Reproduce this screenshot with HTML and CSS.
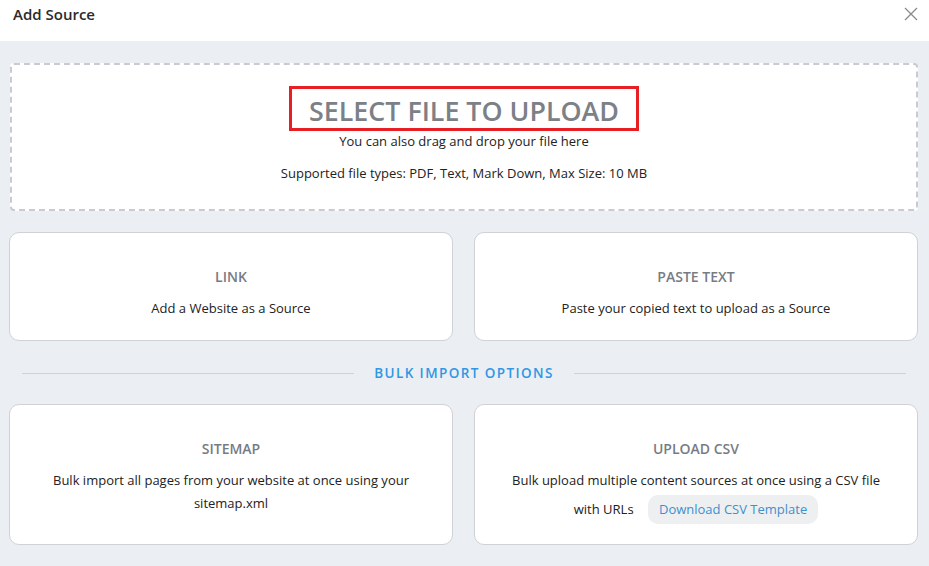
FILE: index.html
```html
<!DOCTYPE html>
<html>
<head>
<meta charset="utf-8">
<link rel="stylesheet" href="styles.css">
</head>
<body>
<div class="modal">
  <header class="modal-header">
    <h1 class="modal-title">Add Source</h1>
    <button class="close-btn" aria-label="Close">
      <svg width="14" height="14" viewBox="0 0 14 14"><path d="M1 1L13 13M13 1L1 13" stroke="#8a8a8a" stroke-width="1.3" fill="none"/></svg>
    </button>
  </header>
  <main class="modal-body">
    <section class="dropzone">
      <div class="dz-title">SELECT FILE TO UPLOAD</div>
      <div class="dz-sub">You can also drag and drop your file here</div>
      <div class="dz-types">Supported file types: PDF, Text, Mark Down, Max Size: 10 MB</div>
    </section>
    <div class="card-row">
      <div class="card">
        <div class="card-title">LINK</div>
        <div class="card-desc">Add a Website as a Source</div>
      </div>
      <div class="card">
        <div class="card-title">PASTE TEXT</div>
        <div class="card-desc">Paste your copied text to upload as a Source</div>
      </div>
    </div>
    <div class="divider">
      <span class="divider-line"></span>
      <span class="divider-text">BULK IMPORT OPTIONS</span>
      <span class="divider-line"></span>
    </div>
    <div class="card-row card-row-bulk">
      <div class="card card-tall">
        <div class="card-title">SITEMAP</div>
        <div class="card-desc">Bulk import all pages from your website at once using your sitemap.xml</div>
      </div>
      <div class="card card-tall">
        <div class="card-title">UPLOAD CSV</div>
        <div class="card-desc">Bulk upload multiple content sources at once using a CSV file with URLs <span class="csv-btn">Download CSV Template</span></div>
      </div>
    </div>
  </main>
</div>
</body>
</html>
```
FILE: styles.css
```css
* { box-sizing: border-box; }
html, body { margin: 0; padding: 0; }
body {
  font-family: "Open Sans", "Noto Sans", sans-serif;
  color: #222;
  background: #ebeef3;
  width: 929px;
  height: 566px;
  overflow: hidden;
}
.modal-header {
  height: 41px;
  background: #fff;
  display: flex;
  align-items: center;
  justify-content: space-between;
  padding: 0 11px 0 13px;
}
.modal-title {
  margin: 0;
  font-size: 15px;
  font-weight: 600;
  color: #2b2b2b;
  margin-top: -13px;
}
.close-btn {
  border: 0;
  background: none;
  padding: 0;
  width: 14px;
  height: 14px;
  margin-top: -13px;
  display: flex;
}
.modal-body {
  padding: 22px 11px 0 10px;
}
.dropzone {
  height: 148px;
  background: #fff;
  border: 2px dashed #c9cbd0;
  border-radius: 4px;
  display: flex;
  flex-direction: column;
  align-items: center;
  padding-top: 21px;
}
.dz-title {
  font-size: 26.8px;
  font-weight: 600;
  color: #7c8087;
  border: 3px solid #e81e25;
  padding: 2px 17px 0;
  line-height: 39px;
  height: 45px;
}
.dz-sub {
  font-size: 13px;
  margin-top: 1px;
  line-height: 18px;
}
.dz-types {
  font-size: 13px;
  margin-top: 14px;
  line-height: 18px;
}
.card-row {
  display: grid;
  grid-template-columns: 1fr 1fr;
  gap: 21px;
  margin-left: -1px;
  margin-top: 21px;
}
.card-row-bulk { margin-top: 20px; }
.card {
  background: #fff;
  border: 1px solid #cfd1d5;
  border-radius: 10px;
  height: 109px;
  display: flex;
  flex-direction: column;
  align-items: center;
  padding: 34px 28px 0;
  text-align: center;
}
.card-tall {
  height: 141px;
}
.card-title {
  font-size: 14px;
  font-weight: 600;
  color: #777c84;
  line-height: 20px;
}
.card-desc {
  font-size: 13px;
  line-height: 23px;
  margin-top: 10px;
}
.csv-btn {
  display: inline-block;
  background: #eeeff1;
  color: #3d8fce;
  border-radius: 10px;
  padding: 3px 11px;
  margin: 3px 0 0 11px;
  line-height: 23px;
}
.divider {
  display: flex;
  align-items: center;
  margin: 21px 12px 0 12px;
  height: 22px;
}
.divider-line {
  flex: 1;
  height: 1px;
  background: #cfd1d5;
}
.divider-text {
  font-size: 13.5px;
  font-weight: 600;
  color: #2f97e4;
  letter-spacing: 1.4px;
  padding: 0 20px;
}
```
